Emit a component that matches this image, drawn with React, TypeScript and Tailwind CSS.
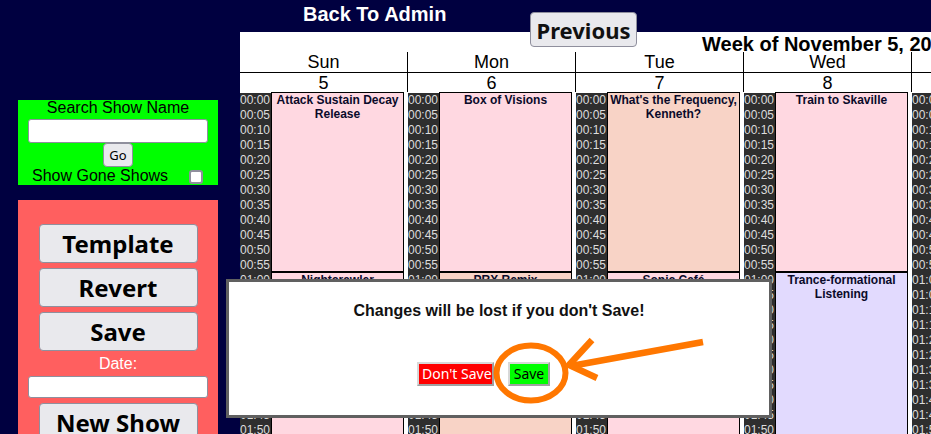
import React from "react";

type Tone = "pink" | "peach" | "lilac";

const toneClass: Record<Tone, string> = {
  pink: "bg-[#ffd8e1]",
  peach: "bg-[#f8d3c6]",
  lilac: "bg-[#e2dafe]",
};

const days: { name: string; date: number; shows: { title: string; tone: Tone }[] }[] = [
  {
    name: "Sun",
    date: 5,
    shows: [
      { title: "Attack Sustain Decay Release", tone: "pink" },
      { title: "Nightcrawler", tone: "pink" },
    ],
  },
  {
    name: "Mon",
    date: 6,
    shows: [
      { title: "Box of Visions", tone: "pink" },
      { title: "PRX Remix", tone: "peach" },
    ],
  },
  {
    name: "Tue",
    date: 7,
    shows: [
      { title: "What's the Frequency, Kenneth?", tone: "peach" },
      { title: "Sonic Café", tone: "pink" },
    ],
  },
  {
    name: "Wed",
    date: 8,
    shows: [
      { title: "Train to Skaville", tone: "pink" },
      { title: "Trance-formational Listening", tone: "lilac" },
    ],
  },
  { name: "Thu", date: 9, shows: [{ title: "", tone: "pink" }, { title: "", tone: "pink" }] },
  { name: "Fri", date: 10, shows: [{ title: "", tone: "pink" }, { title: "", tone: "pink" }] },
  { name: "Sat", date: 11, shows: [{ title: "", tone: "pink" }, { title: "", tone: "pink" }] },
];

const times: string[] = [];
for (let h = 0; h < 2; h++) {
  for (let m = 0; m < 60; m += 5) {
    times.push(`0${h}:${m < 10 ? "0" : ""}${m}`);
  }
}

function SideButton({ label }: { label: string }) {
  return (
    <button className="h-[39px] w-[159px] shrink-0 rounded-[4px] border border-[#8f8f9d] bg-[#e9e9ed] font-['Noto_Sans',sans-serif] text-[24px] font-bold leading-none text-black">
      {label}
    </button>
  );
}

function DayColumn({ day }: { day: (typeof days)[0] }) {
  return (
    <div className="flex w-[168px] shrink-0">
      <div className="mt-[1px] w-[31px] shrink-0 bg-[#2e2e2e]">
        {times.map((t) => (
          <div key={t} className="h-[15px] text-[12px] leading-[15px] text-[#dddddd]">
            {t}
          </div>
        ))}
      </div>
      <div className="w-[133px] shrink-0">
        {day.shows.map((s, i) => (
          <div
            key={i}
            className={`h-[180px] border border-black px-[2px] text-center text-[12px] font-bold leading-[14px] text-[#0a0a2a] ${toneClass[s.tone]}`}
          >
            {s.title}
          </div>
        ))}
      </div>
    </div>
  );
}

export default function App() {
  return (
    <div className="relative h-[434px] w-[931px] overflow-hidden bg-[#000040] font-['Liberation_Sans',Arial,sans-serif]">
      <div className="h-[32px] pl-[303px] pt-[3px] text-[20px] font-bold leading-[23px] text-white">
        Back To Admin
      </div>

      <div className="flex">
        <aside className="w-[240px] shrink-0 pl-[18px] pt-[68px]">
          <div className="flex h-[85px] w-[200px] flex-col items-center bg-[#00ff00] text-[16px] text-black">
            <div className="h-[16px] leading-4">Search Show Name</div>
            <input className="mt-[3px] h-[24px] w-[180px] rounded-[3px] border border-[#8f8f9d] bg-white" />
            <button className="h-[24px] w-[30px] rounded-[4px] border border-[#8f8f9d] bg-[#e9e9ed] font-['Noto_Sans',sans-serif] text-[13px] leading-none">
              Go
            </button>
            <div className="mt-[1px] flex h-[16px] w-full items-center pl-[14px] leading-4">
              <span>Show Gone Shows</span>
              <span className="ml-[21px] mt-[1px] h-[14px] w-[14px] rounded-[3px] border-2 border-[#8f8f9d] bg-white" />
            </div>
          </div>

          <div className="mt-[15px] flex h-[300px] w-[200px] flex-col items-center gap-[5px] bg-[#ff5f5f] pt-[24px]">
            <SideButton label="Template" />
            <SideButton label="Revert" />
            <SideButton label="Save" />
            <div className="-mb-[1px] h-[16px] text-[16px] leading-4 text-white">Date:</div>
            <input className="h-[22px] w-[180px] shrink-0 rounded-[3px] border border-[#8f8f9d] bg-white" />
            <SideButton label="New Show" />
          </div>
        </aside>

        <main className="h-[402px] w-[1176px] shrink-0 bg-white text-black">
          <div className="h-[20px] text-center text-[20px] font-bold leading-[24px]">
            Week of November 5, 2023
          </div>
          <div className="flex">
            {days.map((d) => (
              <div key={d.name} className="w-[168px] shrink-0">
                <div className="h-[21px] border-b border-r border-black text-center text-[18px] leading-[20px]">
                  {d.name}
                </div>
                <div className="h-[19px] border-r border-black text-center text-[18px] leading-[20px]">
                  {d.date}
                </div>
              </div>
            ))}
          </div>
          <div className="flex">
            {days.map((d) => (
              <DayColumn key={d.name} day={d} />
            ))}
          </div>
        </main>
      </div>

      <button className="absolute left-[530px] top-[12px] h-[35px] w-[107px] rounded-[4px] border border-[#8f8f9d] bg-[#e9e9ed] font-['Noto_Sans',sans-serif] text-[22px] font-bold leading-none text-[#111]">
        Previous
      </button>

      <div className="absolute left-[226px] top-[279px] h-[139px] w-[546px] border-[3px] border-[#606060] bg-white">
        <div className="pt-[20px] text-center text-[16px] font-bold leading-[18px] text-[#111]">
          Changes will be lost if you don't Save!
        </div>
        <div className="mt-[42px] flex gap-[14px] pl-[188px] font-['Noto_Sans',sans-serif] text-[14px]">
          <button className="h-[24px] w-[77px] overflow-hidden whitespace-nowrap border-2 border-b-[#a0a0a0] border-l-[#d8d8d8] border-r-[#a0a0a0] border-t-[#d8d8d8] bg-[#ff0000] px-[3px] leading-none text-white">
            Don't Save
          </button>
          <button className="h-[24px] w-[42px] border-2 border-b-[#a0a0a0] border-l-[#d8d8d8] border-r-[#a0a0a0] border-t-[#d8d8d8] bg-[#00ff00] leading-none text-black">
            Save
          </button>
        </div>
      </div>

      <svg className="pointer-events-none absolute left-0 top-0" width="931" height="434" viewBox="0 0 931 434">
        <ellipse cx="531" cy="373" rx="34.5" ry="27.5" fill="none" stroke="#ff7700" strokeWidth="6" />
        <line x1="703" y1="342" x2="571" y2="366" stroke="#ff7700" strokeWidth="6.5" />
        <polyline points="592,340 569,365 597,378" fill="none" stroke="#ff7700" strokeWidth="6.5" strokeLinejoin="miter" />
      </svg>
    </div>
  );
}
